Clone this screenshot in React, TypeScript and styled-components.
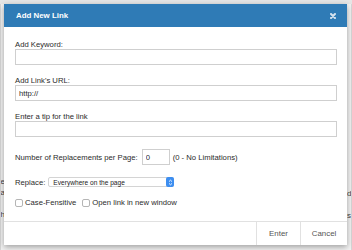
import { createGlobalStyle, styled } from "styled-components";

const GlobalStyle = createGlobalStyle`
  html, body {
    margin: 0;
    padding: 0;
    width: 352px;
    height: 250px;
    overflow: hidden;
    background: #ededed;
    font-family: "Liberation Sans", Arial, sans-serif;
  }

  * {
    box-sizing: border-box;
  }
`;

const colors = {
  header: "#2f7bb6",
  label: "#2b2b2b",
  border: "#cfcfcf",
  divider: "#e1e1e1",
  button: "#555555",
  stepper: "#3d8ef0",
};

const App = () => {
  return (
    <>
      <GlobalStyle />
      <Page>
        <BackColumn $side="left">
          <BackText $top={173}>re</BackText>
          <BackText $top={2}>la</BackText>
          <BackText $top={13}>h</BackText>
        </BackColumn>
        <Spacer />
        <BackColumn $side="right">
          <BackText $top={185}>d</BackText>
          <BackText $top={13}>s</BackText>
        </BackColumn>
      </Page>

      <Dialog>
        <Header>
          <Title>Add New Link</Title>
          <Close aria-label="close">
            <svg width="6" height="6" viewBox="0 0 6 6">
              <path
                d="M1 1 L5 5 M5 1 L1 5"
                stroke="#d6e3ef"
                strokeWidth="2"
                strokeLinecap="round"
              />
            </svg>
          </Close>
        </Header>

        <Body>
          <Field>
            <Label>Add Keyword:</Label>
            <TextInput defaultValue="" />
          </Field>
          <Field>
            <Label>Add Link's URL:</Label>
            <TextInput defaultValue="http://" />
          </Field>
          <Field>
            <Label>Enter a tip for the link</Label>
            <TextInput defaultValue="" />
          </Field>

          <Row $mt={12}>
            <Label>Number of Replacements per Page:</Label>
            <NumberInput defaultValue="0" />
            <Label>(0 - No Limitations)</Label>
          </Row>

          <Row $mt={12}>
            <Label>Replace:</Label>
            <Select>
              <SelectText>Everywhere on the page</SelectText>
              <Stepper>
                <svg width="5" height="7" viewBox="0 0 5 7">
                  <path
                    d="M1 2.6 L2.5 1.2 L4 2.6 M1 4.4 L2.5 5.8 L4 4.4"
                    stroke="#fff"
                    strokeWidth="0.9"
                    fill="none"
                  />
                </svg>
              </Stepper>
            </Select>
          </Row>

          <Row $mt={11}>
            <Check>
              <Box />
              <Label>Case-Fensitive</Label>
            </Check>
            <Check>
              <Box />
              <Label>Open link in new window</Label>
            </Check>
          </Row>
        </Body>

        <Footer>
          <FooterButton $width={44}>Enter</FooterButton>
          <FooterButton $width={47}>Cancel</FooterButton>
        </Footer>
      </Dialog>
    </>
  );
};

const Page = styled.div`
  display: flex;
  width: 352px;
  height: 250px;
  background: #f2f2f2;
  border-top: 4px solid #e6e6e6;
`;

const Spacer = styled.div`
  flex: 1;
`;

const BackColumn = styled.div<{ $side: "left" | "right" }>`
  display: flex;
  flex-direction: column;
  align-items: ${({ $side }) => ($side === "left" ? "flex-end" : "flex-start")};
  width: 5px;
  overflow: hidden;
  border-${({ $side }) => ($side === "left" ? "left" : "right")}: 1px solid #d6d6d6;
`;

const BackText = styled.span<{ $top: number }>`
  margin-top: ${({ $top }) => $top}px;
  font-size: 8px;
  line-height: 9px;
  color: #444;
  white-space: nowrap;
`;

const Dialog = styled.div`
  position: absolute;
  left: 4px;
  top: 4px;
  width: 343px;
  height: 241px;
  display: flex;
  flex-direction: column;
  background: #ffffff;
  box-shadow: 0 2px 6px rgba(0, 0, 0, 0.35);
`;

const Header = styled.div`
  display: flex;
  align-items: center;
  justify-content: space-between;
  height: 23px;
  padding: 0 11px 0 12px;
  background: ${colors.header};
`;

const Title = styled.div`
  font-size: 7.9px;
  font-weight: bold;
  color: #ffffff;
`;

const Close = styled.div`
  display: flex;
  width: 6px;
  height: 6px;
`;

const Body = styled.div`
  flex: 1;
  display: flex;
  flex-direction: column;
  padding: 13px 10px 0 11px;
`;

const Field = styled.div`
  display: flex;
  flex-direction: column;

  & + & {
    margin-top: 11px;
  }
`;

const Label = styled.span`
  font-size: 7.7px;
  line-height: 9px;
  color: ${colors.label};
  white-space: nowrap;
`;

const TextInput = styled.input`
  width: 100%;
  height: 16px;
  margin: 0;
  padding: 0 3px;
  border: 1px solid ${colors.border};
  border-radius: 0;
  font-family: inherit;
  font-size: 7.7px;
  color: ${colors.label};
  outline: none;
`;

const Row = styled.div<{ $mt: number }>`
  display: flex;
  align-items: center;
  margin-top: ${({ $mt }) => $mt}px;
`;

const NumberInput = styled.input`
  width: 28px;
  height: 16px;
  margin: 0 3px 0 4px;
  padding: 0 3px;
  border: 1px solid ${colors.border};
  font-family: inherit;
  font-size: 7.7px;
  color: ${colors.label};
  outline: none;
`;

const Select = styled.div`
  display: flex;
  align-items: center;
  justify-content: space-between;
  width: 126px;
  height: 10px;
  margin-left: 3px;
  padding-left: 4px;
  border: 1px solid #d4d4d4;
  border-radius: 2px;
  background: #ffffff;
`;

const SelectText = styled.span`
  font-size: 6.6px;
  color: #222;
  white-space: nowrap;
`;

const Stepper = styled.div`
  display: flex;
  align-items: center;
  justify-content: center;
  width: 8px;
  height: 10px;
  margin-right: -1px;
  border-radius: 2px;
  background: ${colors.stepper};
`;

const Check = styled.label`
  display: flex;
  align-items: center;
  gap: 2px;

  & + & {
    margin-left: 6px;
  }
`;

const Box = styled.span`
  width: 8px;
  height: 8px;
  border: 1px solid #b5b5b5;
  border-radius: 2px;
  background: #ffffff;
`;

const Footer = styled.div`
  display: flex;
  justify-content: flex-end;
  height: 24px;
  border-top: 1px solid ${colors.divider};
`;

const FooterButton = styled.div<{ $width: number }>`
  display: flex;
  align-items: center;
  justify-content: center;
  width: ${({ $width }) => $width}px;
  border-left: 1px solid ${colors.divider};
  font-size: 7.9px;
  color: ${colors.button};
`;

export default App;
